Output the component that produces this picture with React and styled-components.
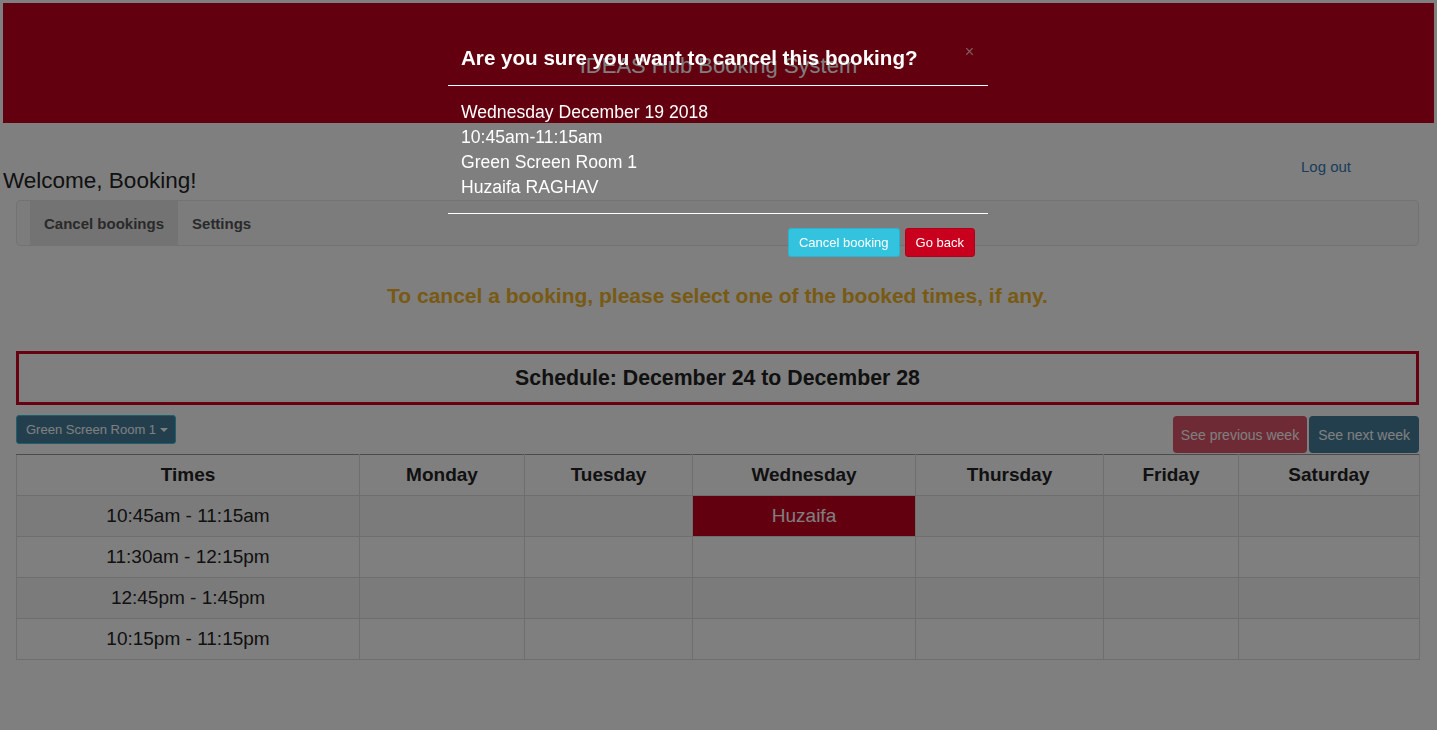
import React from "react";
import styled, { createGlobalStyle } from "styled-components";

const GlobalStyle = createGlobalStyle`
  html, body {
    margin: 0;
    padding: 0;
    background: #fff;
    font-family: "Liberation Sans", Arial, sans-serif;
    color: #222;
  }
`;

const Page = styled.div`
  padding: 3px;
  min-height: 724px;
`;

const Header = styled.header`
  height: 120px;
  background: #c6001e;
  display: flex;
  align-items: center;
  justify-content: center;
  padding-top: 6px;
  box-sizing: border-box;
`;

const SiteTitle = styled.h1`
  margin: 0;
  color: #fff;
  font-size: 22px;
  font-weight: normal;
`;

const TopRow = styled.div`
  display: flex;
  justify-content: space-between;
  align-items: flex-start;
  padding-right: 83px;
`;

const Welcome = styled.h2`
  margin: 45px 0 0;
  font-size: 22.5px;
  font-weight: normal;
  color: #222;
`;

const LogOut = styled.a`
  margin-top: 35px;
  font-size: 15px;
  color: #337ab7;
  text-decoration: none;
`;

const Container = styled.div`
  padding: 0 15px 0 13px;
`;

const TabBar = styled.nav`
  margin-top: 6px;
  height: 46px;
  box-sizing: border-box;
  border: 1px solid #e7e7e7;
  border-radius: 4px;
  background: #f8f8f8;
  display: flex;
  padding-left: 13px;
`;

const Tab = styled.a`
  display: flex;
  align-items: center;
  padding: 0 14px;
  font-size: 15px;
  font-weight: bold;
  color: #555;
  background: ${(p) => (p.active ? "#e7e7e7" : "transparent")};
`;

const Notice = styled.p`
  margin: 38px 0 0;
  text-align: center;
  font-size: 21px;
  font-weight: bold;
  color: #f0b428;
`;

const ScheduleBox = styled.div`
  margin-top: 43px;
  height: 54px;
  box-sizing: border-box;
  border: 3px solid #cf0020;
  display: flex;
  align-items: center;
  justify-content: center;
  font-size: 21.3px;
  font-weight: bold;
  color: #222;
`;

const Controls = styled.div`
  margin-top: 10px;
  display: flex;
  justify-content: space-between;
  align-items: flex-start;
`;

const Dropdown = styled.button`
  height: 29px;
  padding: 0 7px 0 9px;
  border: 1px solid #38c0dc;
  border-radius: 3px;
  background: #467e9c;
  color: #fff;
  font-family: inherit;
  font-size: 13px;
  display: flex;
  align-items: center;
  gap: 4px;
`;

const Caret = styled.span`
  width: 0;
  height: 0;
  border-left: 4px solid transparent;
  border-right: 4px solid transparent;
  border-top: 4px solid #fff;
`;

const WeekNav = styled.div`
  display: flex;
  gap: 2px;
  margin-top: 1px;
`;

const WeekButton = styled.button`
  height: 37px;
  padding: 0 ${(p) => (p.prev ? "8px" : "9px")};
  border: none;
  border-radius: 4px;
  background: ${(p) => (p.prev ? "#dc546a" : "#467e9c")};
  color: #fff;
  font-family: inherit;
  font-size: 14px;
`;

const Table = styled.table`
  width: 100%;
  table-layout: fixed;
  border-collapse: collapse;
  font-size: 19px;
  margin-top: 1px;
`;

const Th = styled.th`
  height: 38px;
  border: 1px solid #ddd;
  border-top: 1px solid #999;
  font-weight: bold;
  color: #222;
`;

const Row = styled.tr`
  background: ${(p) => (p.striped ? "#f7f7f7" : "transparent")};
`;

const Td = styled.td`
  height: 38px;
  border: 1px solid #ddd;
  text-align: center;
  background: ${(p) => (p.booked ? "#c6001e" : "transparent")};
  color: ${(p) => (p.booked ? "#fff" : "#222")};
`;

const Overlay = styled.div`
  position: fixed;
  inset: 0;
  background: rgba(0, 0, 0, 0.5);
  z-index: 10;
`;

const Modal = styled.div`
  position: fixed;
  top: 30px;
  left: 448px;
  width: 540px;
  z-index: 20;
  color: #fff;
`;

const ModalHeader = styled.div`
  position: relative;
  padding: 17px 13px 16px;
  border-bottom: 1px solid #fff;
`;

const ModalTitle = styled.h4`
  margin: 0;
  font-size: 20.6px;
  line-height: 22px;
  font-weight: bold;
`;

const Close = styled.span`
  position: absolute;
  right: 14px;
  top: 14px;
  font-size: 16px;
  color: #999;
  opacity: 0.6;
  line-height: 1;
`;

const ModalBody = styled.div`
  padding: 14px 13px 13px;
  font-size: 17.6px;
  line-height: 25px;
  border-bottom: 1px solid #fff;
`;

const ModalFooter = styled.div`
  padding: 14px 13px;
  display: flex;
  justify-content: flex-end;
  gap: 5px;
`;

const ModalButton = styled.button`
  height: 29px;
  padding: 0 10px;
  border: 1px solid ${(p) => (p.danger ? "#b0001a" : "#2ab4d0")};
  border-radius: 3px;
  background: ${(p) => (p.danger ? "#c8001e" : "#33c3df")};
  color: #fff;
  font-family: inherit;
  font-size: 13px;
`;

const days = ["Monday", "Tuesday", "Wednesday", "Thursday", "Friday", "Saturday"];
const colWidths = [343, 165, 168, 223, 188, 135, 181];
const times = [
  "10:45am - 11:15am",
  "11:30am - 12:15pm",
  "12:45pm - 1:45pm",
  "10:15pm - 11:15pm",
];

export default function App() {
  return (
    <>
      <GlobalStyle />
      <Page>
        <Header>
          <SiteTitle>IDEAS Hub Booking System</SiteTitle>
        </Header>
        <TopRow>
          <Welcome>Welcome, Booking!</Welcome>
          <LogOut href="#">Log out</LogOut>
        </TopRow>
        <Container>
          <TabBar>
            <Tab active>Cancel bookings</Tab>
            <Tab>Settings</Tab>
          </TabBar>
          <Notice>To cancel a booking, please select one of the booked times, if any.</Notice>
          <ScheduleBox>Schedule: December 24 to December 28</ScheduleBox>
          <Controls>
            <Dropdown>
              Green Screen Room 1 <Caret />
            </Dropdown>
            <WeekNav>
              <WeekButton prev>See previous week</WeekButton>
              <WeekButton>See next week</WeekButton>
            </WeekNav>
          </Controls>
          <Table>
            <colgroup>
              {colWidths.map((w, i) => (
                <col key={i} style={{ width: w }} />
              ))}
            </colgroup>
            <thead>
              <tr>
                <Th>Times</Th>
                {days.map((d) => (
                  <Th key={d}>{d}</Th>
                ))}
              </tr>
            </thead>
            <tbody>
              {times.map((t, r) => (
                <Row key={t} striped={r % 2 === 0}>
                  <Td>{t}</Td>
                  {days.map((d) => (
                    <Td key={d} booked={r === 0 && d === "Wednesday"}>
                      {r === 0 && d === "Wednesday" ? "Huzaifa" : ""}
                    </Td>
                  ))}
                </Row>
              ))}
            </tbody>
          </Table>
        </Container>
      </Page>
      <Overlay />
      <Modal>
        <ModalHeader>
          <ModalTitle>Are you sure you want to cancel this booking?</ModalTitle>
          <Close>×</Close>
        </ModalHeader>
        <ModalBody>
          Wednesday December 19 2018
          <br />
          10:45am-11:15am
          <br />
          Green Screen Room 1
          <br />
          Huzaifa RAGHAV
        </ModalBody>
        <ModalFooter>
          <ModalButton>Cancel booking</ModalButton>
          <ModalButton danger>Go back</ModalButton>
        </ModalFooter>
      </Modal>
    </>
  );
}
